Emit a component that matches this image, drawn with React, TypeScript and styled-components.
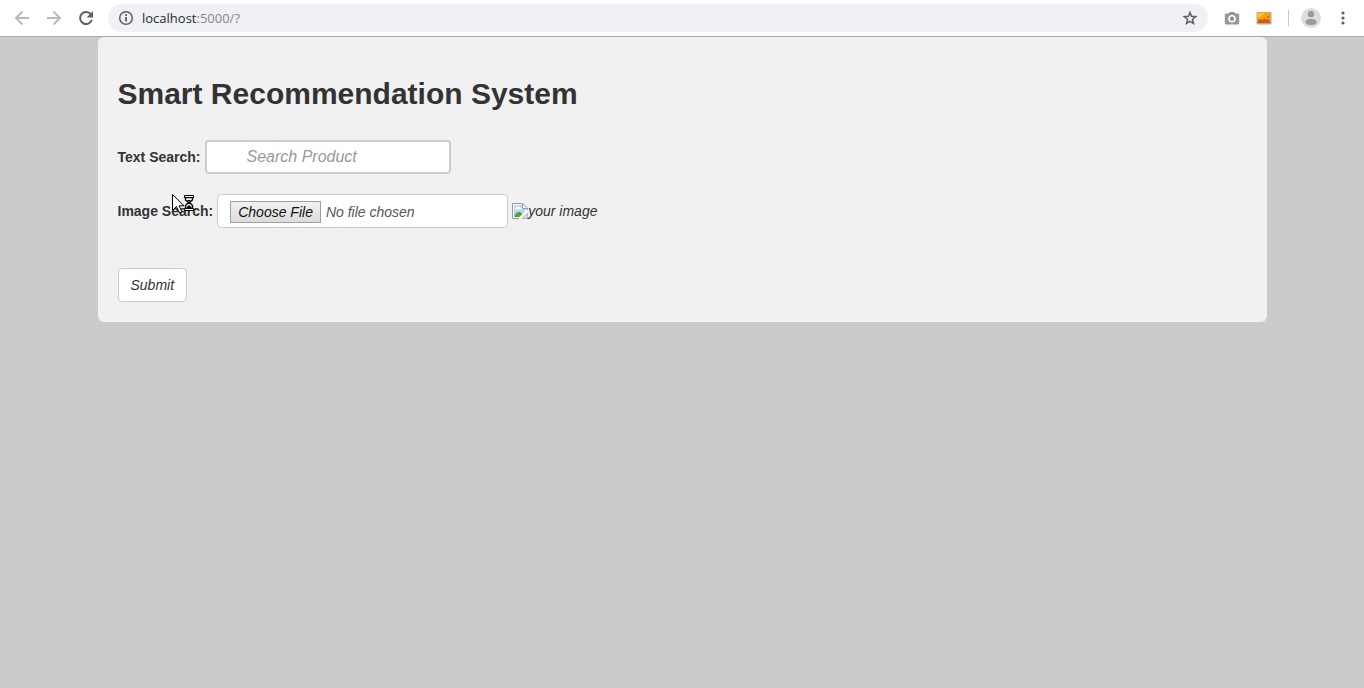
import React from "react";
import styled, { createGlobalStyle } from "styled-components";

const GlobalStyle = createGlobalStyle`
  *, *::before, *::after { box-sizing: border-box; }
  body {
    margin: 0;
    background: #cbcbcb;
    color: #333;
    font-family: "Liberation Sans", Arial, sans-serif;
    font-size: 14px;
    line-height: 20px;
  }
`;

const Toolbar = styled.header`
  display: flex;
  align-items: center;
  height: 37px;
  padding: 0 13px 0 14px;
  background: #fff;
  border-bottom: 1px solid #a9a9a9;
`;

const IconButton = styled.button<{ $muted?: boolean }>`
  display: flex;
  align-items: center;
  justify-content: center;
  flex: none;
  width: 16px;
  height: 16px;
  padding: 0;
  border: 0;
  background: none;
  color: ${(p) => (p.$muted ? "#b9babd" : "#5b5e63")};
`;

const Navigation = styled.nav`
  display: flex;
  gap: 16px;
`;

const AddressBar = styled.div`
  display: flex;
  align-items: center;
  flex: 1;
  height: 28px;
  margin-left: 14px;
  padding: 0 10px;
  border-radius: 14px;
  background: #f0f1f4;
`;

const Address = styled.span`
  flex: 1;
  margin-left: 8px;
  color: #85888c;
  font-family: "Open Sans", "Noto Sans", sans-serif;
  font-size: 13px;
`;

const Host = styled.span`
  color: #27292d;
`;

const Extensions = styled.div`
  display: flex;
  align-items: center;
  gap: 16px;
  margin-left: 16px;
`;

const Divider = styled.span`
  width: 1px;
  height: 16px;
  background: #c8cacd;
`;

const ProfileGroup = styled.div`
  display: flex;
  align-items: center;
  gap: 14px;
  margin-left: -4px;
`;

const Avatar = styled(IconButton)`
  width: 20px;
  height: 20px;
`;

const Panel = styled.main`
  max-width: 1169px;
  margin: 0 auto;
  padding: 40px 20px 20px;
  border-radius: 6px;
  background: #f1f1f1;
`;

const Title = styled.h1`
  margin: 0 0 30px;
  font-size: 30px;
  line-height: 33px;
`;

const Field = styled.div`
  display: flex;
  align-items: center;
  gap: 4px;
  margin-bottom: 20px;
`;

const Label = styled.label`
  position: relative;
  font-weight: bold;
`;

const SearchInput = styled.input`
  width: 246px;
  height: 34px;
  padding: 0 12px 0 40px;
  border: 2px solid #ccc;
  border-radius: 4px;
  background: #fff;
  color: #333;
  font: italic 16px "Liberation Sans", Arial, sans-serif;
  &::placeholder { color: #999; opacity: 1; }
`;

const FileInput = styled.input`
  width: 291px;
  height: 34px;
  padding: 6px 12px;
  border: 1px solid #ccc;
  border-radius: 4px;
  background: #fff;
  color: #555;
  font: italic 14px/20px "Liberation Sans", Arial, sans-serif;
  &::file-selector-button {
    height: 22px;
    margin: 0 5px 0 0;
    padding: 0 7px;
    border: 1px solid #a0a0a0;
    border-radius: 0;
    background: linear-gradient(#f2f2f2, #dcdcdc);
    color: #111;
    font: inherit;
  }
`;

const Preview = styled.div`
  display: flex;
  align-items: center;
  font-style: italic;
`;

const SubmitButton = styled.button`
  display: block;
  height: 34px;
  margin-top: 40px;
  padding: 0 12px;
  border: 1px solid #ccc;
  border-radius: 4px;
  background: #fff;
  color: #333;
  font: italic 14px "Liberation Sans", Arial, sans-serif;
`;

const BusyPointer = styled.svg`
  position: absolute;
  top: -7px;
  left: 54px;
  pointer-events: none;
`;

const BackIcon = () => (
  <svg width="16" height="16" viewBox="0 0 16 16" fill="none" stroke="currentColor" strokeWidth="2">
    <path d="M15 8H2.5M8.500 1.500 2 8l6.500 6.500" />
  </svg>
);

const ForwardIcon = () => (
  <svg width="16" height="16" viewBox="0 0 16 16" fill="none" stroke="currentColor" strokeWidth="2">
    <path d="M1 8h12.500M7.500 1.500 14 8l-6.500 6.500" />
  </svg>
);

const ReloadIcon = () => (
  <svg width="16" height="16" viewBox="0 0 16 16">
    <path d="M12.800 4.300A6 6 0 1 0 13.800 9.800" fill="none" stroke="currentColor" strokeWidth="2" />
    <path d="M15 1v6.500H8.500z" fill="currentColor" />
  </svg>
);

const InfoIcon = () => (
  <svg width="16" height="16" viewBox="0 0 16 16" fill="none" stroke="currentColor">
    <circle cx="8" cy="8" r="6.300" strokeWidth="1.500" />
    <path d="M8 7v4.500M8 4.300v1.700" strokeWidth="1.800" />
  </svg>
);

const StarIcon = () => (
  <svg width="16" height="16" viewBox="0 0 16 16" fill="none" stroke="currentColor" strokeWidth="1.500">
    <path d="m8 2.500 1.500 3.800 4.200.3-3.200 2.700 1 4.200L8 11.300l-3.500 2.200 1-4.200-3.200-2.700 4.200-.3z" />
  </svg>
);

const CameraIcon = () => (
  <svg width="16" height="16" viewBox="0 0 16 16">
    <path d="M2 3.500h2.700L5.800 2h4.400l1.100 1.500H14a1.200 1.200 0 0 1 1.200 1.200v8.600a1.200 1.200 0 0 1-1.200 1.200H2a1.200 1.200 0 0 1-1.200-1.200V4.700A1.200 1.200 0 0 1 2 3.500z" fill="#979797" />
    <circle cx="8" cy="8.800" r="3.800" fill="#fff" />
    <circle cx="8" cy="8.800" r="2.200" fill="#929292" />
  </svg>
);

const PictureIcon = () => (
  <svg width="16" height="16" viewBox="0 0 16 16">
    <rect x=".5" y="2" width="15" height="12.500" rx="1" fill="#b4a898" />
    <rect x="1.500" y="3" width="13" height="10.500" fill="#f6a313" />
    <path d="M1.500 3h7L5 7 1.500 8z" fill="#ffc22e" />
    <path d="M2 13V10.500l2-1.500 2.500 1 2-2 2 2 1.500-1 2 2v2z" fill="#d65a0b" />
    <circle cx="12" cy="7" r="1.200" fill="#df6d0c" />
  </svg>
);

const AvatarIcon = () => (
  <svg width="20" height="20" viewBox="0 0 20 20">
    <circle cx="10" cy="10" r="10" fill="#dedede" />
    <circle cx="10" cy="6" r="3.200" fill="#9b9b9b" />
    <ellipse cx="10" cy="13.900" rx="5.700" ry="3.200" fill="#9b9b9b" />
  </svg>
);

const MenuIcon = () => (
  <svg width="16" height="16" viewBox="0 0 16 16" fill="currentColor">
    <circle cx="8" cy="3" r="1.600" />
    <circle cx="8" cy="8" r="1.600" />
    <circle cx="8" cy="13" r="1.600" />
  </svg>
);

const BrokenImageIcon = () => (
  <svg width="16" height="16" viewBox="0 0 16 16">
    <path d="M.5.500h10l5 5v10H.5z" fill="#fff" />
    <path d="M2 2h8v4h4v8H2z" fill="#bfd5f4" />
    <path d="M3 6.200c0-1.500 1-2 2-2 .6-1.200 2.800-1 3 .5 1 0 1.500.6 1.500 1.500z" fill="#fff" />
    <path d="M2 14c1-3.500 3-5 5-5s4 2 5 5z" fill="#4da63b" />
    <path d="M7.500 16 16 7.500V16z" fill="#f1f1f1" />
    <path d="M7 15.500H.5V.500h10l5 5V8M10.500.500v5h5" fill="none" stroke="#969ba2" />
    <path d="M10.500 15.500h5v-5z" fill="#dfe5e9" stroke="#969ba2" strokeWidth=".7" />
    <path d="m7.500 15 8-8" stroke="#fff" strokeWidth="1.500" />
  </svg>
);

const App = () => (
  <>
    <GlobalStyle />
    <Toolbar>
      <Navigation aria-label="Browser">
        <IconButton $muted aria-label="Back"><BackIcon /></IconButton>
        <IconButton $muted aria-label="Forward"><ForwardIcon /></IconButton>
        <IconButton aria-label="Reload"><ReloadIcon /></IconButton>
      </Navigation>
      <AddressBar>
        <IconButton aria-label="Site information"><InfoIcon /></IconButton>
        <Address><Host>localhost</Host>:5000/?</Address>
        <IconButton aria-label="Bookmark"><StarIcon /></IconButton>
      </AddressBar>
      <Extensions>
        <IconButton aria-label="Capture"><CameraIcon /></IconButton>
        <IconButton aria-label="Pictures"><PictureIcon /></IconButton>
        <Divider />
        <ProfileGroup>
          <Avatar aria-label="Profile"><AvatarIcon /></Avatar>
          <IconButton aria-label="Menu"><MenuIcon /></IconButton>
        </ProfileGroup>
      </Extensions>
    </Toolbar>
    <Panel>
      <Title>Smart Recommendation System</Title>
      <form onSubmit={(e) => e.preventDefault()}>
        <Field>
          <Label htmlFor="text-search">Text Search:</Label>
          <SearchInput id="text-search" type="text" placeholder="Search Product" />
        </Field>
        <Field>
          <Label htmlFor="image-search">
            Image Search:
            <BusyPointer width="24" height="22" viewBox="0 0 24 22" aria-hidden="true">
              <path d="M.5.500v16l4-4 3 6.500 2.500-1.200-3-6h5z" fill="#fff" stroke="#000" />
              <path d="M13.500 3.500V6l3 2.500-3 3V15h7v-3.500l-3-3 3-2.500V3.500z" fill="#fff" stroke="#000" strokeWidth="1.400" />
              <path d="M12.500 1.500h9v2h-9zM12.500 14.500h9v2h-9z" fill="#fff" stroke="#000" />
              <path d="M15 6h4l-2 2zM14.500 14v-1l2.500-2 2.500 2v1z" fill="#000" />
            </BusyPointer>
          </Label>
          <FileInput id="image-search" type="file" />
          <Preview role="img" aria-label="your image">
            <BrokenImageIcon />
            <span>your image</span>
          </Preview>
        </Field>
        <SubmitButton type="submit">Submit</SubmitButton>
      </form>
    </Panel>
  </>
);

export default App;
